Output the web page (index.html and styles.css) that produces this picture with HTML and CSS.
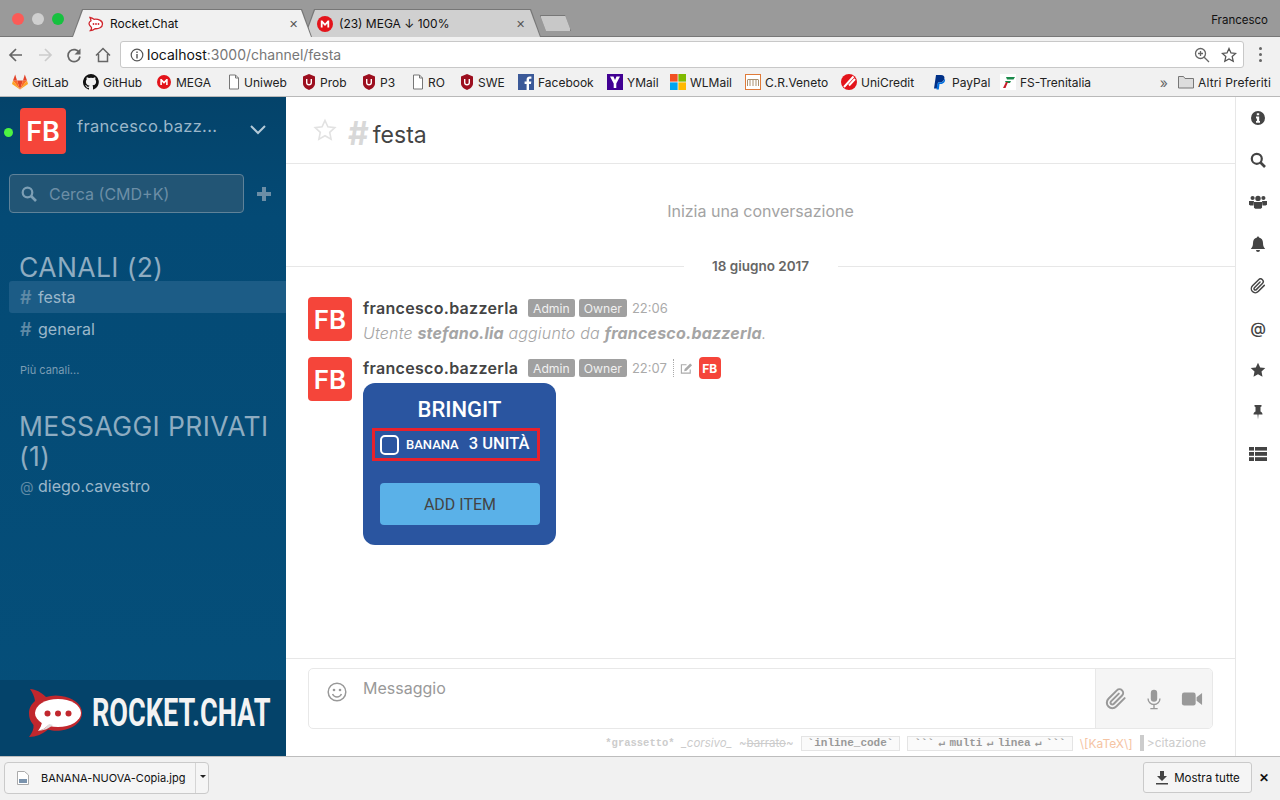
FILE: index.html
```html
<!DOCTYPE html>
<html lang="it">
<head>
  <meta charset="UTF-8">
  <title>Rocket.Chat</title>
  <link rel="stylesheet" href="styles.css">
</head>
<body>
<svg class="defs" width="0" height="0">
  <symbol id="clip" viewBox="0 0 24 24"><path fill="none" stroke="currentColor" stroke-width="2.2" stroke-linecap="round" d="M21.44 11.05l-9.19 9.19a6 6 0 0 1-8.49-8.49l9.19-9.19a4 4 0 0 1 5.66 5.66l-9.2 9.19a2 2 0 0 1-2.83-2.83l8.49-8.48"/></symbol>
  <symbol id="mega" viewBox="0 0 16 16"><circle cx="8" cy="8" r="8" fill="#e3141b"/><path fill="#fff" d="M3.8 11.5v-7h1.5L8 7.4l2.7-2.9h1.5v7h-1.8V7.6L8 10 5.6 7.6v3.9z"/></symbol>
  <symbol id="shield" viewBox="0 0 14 16"><path fill="#9c0f1f" d="M1 2.5 7 0l6 2.5v7C13 13 9.5 15 7 16c-2.500-1-6-3-6-6.500z"/><path fill="none" stroke="#fff" stroke-width="1.400" d="M4.700 5v3.500a2.300 2.300 0 0 0 4.600 0V5"/></symbol>
  <symbol id="page" viewBox="0 0 12 16"><path fill="#fff" stroke="#777" d="M1.500 1h6L10.500 4v11h-9z"/><path fill="none" stroke="#777" d="M7.500 1v3h3"/></symbol>
  <symbol id="rocket" viewBox="0 0 16 16"><path fill="#fff" stroke="#d0262d" stroke-width="1.300" d="M2 1.500c2 .3 3 1 4 1.800 4-.5 8.500 1 8.500 4.700 0 3.500-4 5-7.500 4.700-1.500 1.200-3 1.800-4.500 1.800 1-1 1.200-2 1-3C1.800 9.800 1 9 1 7.800c0-1.300.8-2.300 2-3C2.800 3.500 2.500 2.500 2 1.500z"/><circle cx="5.500" cy="8" r=".9" fill="#d0262d"/><circle cx="8" cy="8" r=".9" fill="#d0262d"/><circle cx="10.500" cy="8" r=".9" fill="#d0262d"/></symbol>
</svg>

<div class="page">
  <!-- browser -->
  <div class="tabstrip">
    <div class="lights"><i class="red"></i><i class="grey"></i><i class="green"></i></div>
    <div class="tab active"><div class="tab-in">
      <svg class="fav"><use href="#rocket"/></svg><span class="tab-title">Rocket.Chat</span><span class="tab-x">✕</span>
    </div></div>
    <div class="tab second"><div class="tab-in">
      <svg class="fav"><use href="#mega"/></svg><span class="tab-title">(23) MEGA ↓ 100%</span><span class="tab-x">✕</span>
    </div></div>
    <div class="tab newtab"><div class="tab-in"></div></div>
    <span class="profile">Francesco</span>
  </div>

  <div class="toolbar">
    <svg class="nav" viewBox="0 0 16 16"><path fill="none" stroke="#666" stroke-width="1.700" d="M14 8H2.500M8 2 2 8l6 6"/></svg>
    <svg class="nav" viewBox="0 0 16 16"><path fill="none" stroke="#ccc" stroke-width="1.700" d="M2 8h11.500M8 2l6 6-6 6"/></svg>
    <svg class="nav" viewBox="0 0 16 16"><path fill="none" stroke="#666" stroke-width="1.700" d="M13.500 6A6 6 0 1 0 14 9.500"/><path fill="#666" d="M14.500 1.500v6h-6z"/></svg>
    <svg class="nav" viewBox="0 0 16 16"><path fill="none" stroke="#666" stroke-width="1.500" d="M1 8.500 8 1.500l7 7M3.500 7v7.500h9V7"/></svg>
    <div class="address">
      <svg class="addr-i" viewBox="0 0 14 14"><circle cx="7" cy="7" r="5.800" fill="none" stroke="#555" stroke-width="1.200"/><path stroke="#555" stroke-width="1.400" d="M7 6v4.500M7 3.500v1.400"/></svg>
      <span class="url">localhost<span class="url-rest">:3000/channel/festa</span></span>
      <svg class="addr-r" viewBox="0 0 16 16"><circle cx="6.500" cy="6.500" r="5" fill="none" stroke="#666" stroke-width="1.300"/><path stroke="#666" stroke-width="1.300" d="M10.200 10.200 15 15M4 6.500h5M6.500 4v5"/></svg>
      <svg class="addr-r" viewBox="0 0 16 16"><path fill="none" stroke="#555" stroke-width="1.300" d="m8 1.500 2 4.400 4.700.5-3.500 3.200 1 4.700L8 12l-4.200 2.300 1-4.700L1.300 6.400 6 5.900z"/></svg>
    </div>
    <div class="dots"><i></i><i></i><i></i></div>
  </div>

  <div class="bookmarks">
    <span class="bm"><svg class="bi" viewBox="0 0 16 16"><path fill="#e24329" d="m8 15.500 3-9H5z"/><path fill="#fc6d26" d="M8 15.500 5 6.500H1zM8 15.500l3-9h4z"/><path fill="#fca326" d="M1 6.500 0 10l8 5.500zM15 6.500l1 3.500-8 5.500z"/><path fill="#e24329" d="M1 6.500h4L3.200.5zM15 6.500h-4L12.800.5z"/></svg>GitLab</span>
    <span class="bm"><svg class="bi" viewBox="0 0 16 16"><path fill="#111" d="M8 0a8 8 0 0 0-2.500 15.600c.4.100.5-.2.500-.4v-1.400c-2.200.5-2.700-1-2.700-1-.4-.9-.9-1.200-.9-1.200-.7-.5.100-.5.100-.5.800.1 1.200.8 1.200.8.700 1.200 1.900.9 2.300.7.100-.5.300-.9.500-1.100-1.800-.2-3.600-.9-3.600-4 0-.9.300-1.600.8-2.100-.1-.2-.4-1 .1-2.100 0 0 .7-.2 2.200.8a7.600 7.600 0 0 1 4 0c1.500-1 2.200-.8 2.200-.8.400 1.100.2 1.900.1 2.100.5.600.8 1.300.8 2.100 0 3.100-1.900 3.700-3.700 3.900.3.300.6.800.6 1.500v2.200c0 .2.100.5.600.4A8 8 0 0 0 8 0z"/></svg>GitHub</span>
    <span class="bm"><svg class="bi small"><use href="#mega"/></svg>MEGA</span>
    <span class="bm"><svg class="bi page-i"><use href="#page"/></svg>Uniweb</span>
    <span class="bm"><svg class="bi shield"><use href="#shield"/></svg>Prob</span>
    <span class="bm"><svg class="bi shield"><use href="#shield"/></svg>P3</span>
    <span class="bm"><svg class="bi page-i"><use href="#page"/></svg>RO</span>
    <span class="bm"><svg class="bi shield"><use href="#shield"/></svg>SWE</span>
    <span class="bm"><svg class="bi" viewBox="0 0 16 16"><rect width="16" height="16" fill="#3b5998"/><path fill="#fff" d="M11 16v-6h2l.3-2.500H11V6c0-.7.3-1.200 1.200-1.200h1.200V2.600C13.100 2.500 12.400 2.500 11.700 2.500 9.900 2.500 8.600 3.600 8.600 5.600v1.900h-2V10h2v6z"/></svg>Facebook</span>
    <span class="bm"><svg class="bi" viewBox="0 0 16 16"><rect width="16" height="16" fill="#410093"/><path fill="#fff" d="M3 2.500h3.500L8 6l1.500-3.500H13L9.300 9.500V14H6.700V9.500z"/></svg>YMail</span>
    <span class="bm"><svg class="bi" viewBox="0 0 16 16"><rect width="7.600" height="7.600" fill="#f25022"/><rect x="8.400" width="7.600" height="7.600" fill="#7fba00"/><rect y="8.400" width="7.600" height="7.600" fill="#00a4ef"/><rect x="8.400" y="8.400" width="7.600" height="7.600" fill="#ffb900"/></svg>WLMail</span>
    <span class="bm"><svg class="bi" viewBox="0 0 16 16"><rect x=".5" y=".5" width="15" height="15" fill="#fff" stroke="#e07b39"/><path fill="none" stroke="#a89070" d="M2.500 12V6M5 12V5M8 12V5M11 12V5M13.500 12V6M2.500 5.500h11"/></svg>C.R.Veneto</span>
    <span class="bm"><svg class="bi" viewBox="0 0 16 16"><circle cx="8" cy="8" r="8" fill="#e3141b"/><path stroke="#fff" stroke-width="2" d="M3 13 12.500 2.500M8 11.500 14 5"/></svg>UniCredit</span>
    <span class="bm"><svg class="bi" viewBox="0 0 16 16"><path fill="#003087" d="M4 1h5c2.500 0 3.800 1.300 3.400 3.500C12 7 10 8.500 7.500 8.500H6L5 14.500H2z"/><path fill="#0070e0" d="M13 5c.5 2.500-1.300 5-4.300 5H7.500L6.800 15.500H4.500L5 12l1-3.500h2c2.300 0 4-1.300 4.500-3.500z"/></svg>PayPal</span>
    <span class="bm"><svg class="bi" viewBox="0 0 16 16"><rect width="16" height="16" fill="#fff"/><path fill="#1a8a4a" d="M6 3h9l-1.500 2.500H7zM5 7h6l-1 2H6z"/><path fill="#c8202c" d="M3 14 6 8h2l-2.500 6z"/></svg>FS-Trenitalia</span>
    <span class="bm-more">»</span>
    <span class="bm bm-folder"><svg class="bi" viewBox="0 0 16 14"><path fill="#ddd" stroke="#777" d="M.5 13V1.500h5l1.500 2h8.500V13z"/></svg>Altri Preferiti</span>
  </div>

  <!-- app -->
  <div class="app">
    <aside class="sidebar">
      <div class="user">
        <i class="status"></i>
        <div class="avatar big">FB</div>
        <span class="username">francesco.bazz...</span>
        <svg class="chevron" viewBox="0 0 16 10"><path fill="none" stroke="#b4cad8" stroke-width="2" d="m1 1 7 7 7-7"/></svg>
      </div>
      <div class="search-row">
        <div class="search">
          <svg class="search-i" viewBox="0 0 16 16"><circle cx="6.500" cy="6.500" r="4.800" fill="none" stroke="#7d9fb5" stroke-width="2.200"/><path stroke="#7d9fb5" stroke-width="2.600" d="m10 10 5 5"/></svg>
          <span>Cerca (CMD+K)</span>
        </div>
        <span class="plus"></span>
      </div>
      <h3 class="side-title first">CANALI (2)</h3>
      <div class="room current"><b>#</b>festa</div>
      <div class="room"><b>#</b>general</div>
      <div class="more">Più canali...</div>
      <h3 class="side-title pvt">MESSAGGI PRIVATI (1)</h3>
      <div class="room dm"><b>@</b>diego.cavestro</div>
      <div class="side-logo">
        <svg class="logo-mark" viewBox="0 0 56 50">
          <path fill="#c1272d" d="M2 1c6 .5 11 3 16 8 5-1.500 10-2 15-1 12 1.500 21 8 21 17 0 10-10 16-21 17.500-5 .5-9 .2-13-1C15 46 8 49 1 49c3-4 5-8 4.500-12C2 33 1 29.500 1 25c0-5 2.500-9 6-12C6.500 8.500 4.500 4.500 2 1z"/>
          <ellipse cx="30" cy="25" rx="23" ry="14" fill="#fff"/>
          <path fill="#fff" d="M14 33c0 4-2 7-4 10 4-1 8-3 11-7z"/>
          <path fill="#ddd" d="M10 43c4-1 8-3 11-7l4 1c-4 3.500-9 5.500-15 6z"/>
          <circle cx="19.500" cy="25.500" r="3" fill="#c1272d"/><circle cx="30" cy="25.500" r="3" fill="#c1272d"/><circle cx="40.500" cy="25.500" r="3" fill="#c1272d"/>
        </svg>
        <span class="logo-box"><span class="logo-text">ROCKET.CHAT</span></span>
      </div>
    </aside>

    <main class="main">
      <header class="room-head">
        <svg class="room-star" viewBox="0 0 24 24"><path fill="none" stroke="#e2e2e2" stroke-width="1.600" d="m12 2.500 2.900 6.300 6.900.8-5.100 4.700 1.400 6.800-6.100-3.400-6.100 3.400 1.400-6.800-5.100-4.700 6.900-.8z"/></svg>
        <span class="room-hash">#</span>
        <span class="room-name">festa</span>
      </header>
      <div class="feed">
        <div class="start">Inizia una conversazione</div>
        <div class="date"><span>18 giugno 2017</span></div>
        <div class="msg">
          <div class="avatar">FB</div>
          <div class="msg-body">
            <div class="msg-head"><span class="author">francesco.bazzerla</span><span class="role">Admin</span><span class="role">Owner</span><span class="time">22:06</span></div>
            <div class="sys">Utente <b>stefano.lia</b> aggiunto da <b>francesco.bazzerla</b>.</div>
          </div>
        </div>
        <div class="msg">
          <div class="avatar">FB</div>
          <div class="msg-body">
            <div class="msg-head"><span class="author">francesco.bazzerla</span><span class="role">Admin</span><span class="role">Owner</span><span class="time">22:07</span>
              <span class="edited">
                <svg class="edit-i" viewBox="0 0 14 14"><path fill="none" stroke="#aaa" stroke-width="1.200" d="M11 8v4H1.500V3H7"/><path fill="#aaa" d="m5 7.500 6-6 2 2-6 6-2.500.5z"/></svg>
                <span class="avatar tiny">FB</span>
              </span>
            </div>
            <div class="card">
              <div class="card-title">BRINGIT</div>
              <div class="item"><i class="check"></i><span class="item-name">BANANA</span><span class="item-qty">3 UNITÀ</span></div>
              <div class="add">ADD ITEM</div>
            </div>
          </div>
        </div>
      </div>
      <footer class="composer">
        <div class="box">
          <svg class="emoji" viewBox="0 0 20 20"><circle cx="10" cy="10" r="8.800" fill="none" stroke="#999" stroke-width="1.500"/><circle cx="7" cy="8" r="1.300" fill="#999"/><circle cx="13" cy="8" r="1.300" fill="#999"/><path fill="none" stroke="#999" stroke-width="1.500" d="M5.500 12c1 2 2.500 3 4.500 3s3.500-1 4.500-3"/></svg>
          <span class="placeholder">Messaggio</span>
          <div class="box-tools">
            <svg class="tool"><use href="#clip"/></svg>
            <svg class="tool" viewBox="0 0 24 24"><rect x="8.500" y="2" width="7" height="13" rx="3.500" fill="#999"/><path fill="none" stroke="#999" stroke-width="1.500" d="M5.500 11.500a6.500 6.500 0 0 0 13 0M12 18v4M8 22.500h8"/></svg>
            <svg class="tool" viewBox="0 0 24 24"><rect x="1" y="5" width="15" height="14" rx="2.500" fill="#999"/><path fill="#999" d="m17 10 6-4.500v13L17 14z"/></svg>
          </div>
        </div>
        <div class="hints">
          <b>*grassetto*</b>
          <i>_corsivo_</i>
          <span>~<s>barrato</s>~</span>
          <code>`inline_code`</code>
          <code class="multi">``` ↵ multi ↵ linea ↵ ```</code>
          <span class="katex">\[KaTeX\]</span>
          <span class="quote">&gt;citazione</span>
        </div>
      </footer>
    </main>

    <nav class="rail">
      <svg class="rail-i" viewBox="0 0 16 16"><path fill-rule="evenodd" fill="#444" d="M8 1a7 7 0 1 0 0 14A7 7 0 0 0 8 1zM6.800 3.200h2.400v2.100H6.800zM6 6.500h3.200v4.400H10V12.800H6v-1.900h.9V8.400H6z"/></svg>
      <svg class="rail-i" viewBox="0 0 16 16"><circle cx="6.800" cy="6.800" r="5" fill="none" stroke="#444" stroke-width="2.200"/><path stroke="#444" stroke-width="2.600" d="m10.500 10.500 4.500 4.500"/></svg>
      <svg class="rail-i wide" viewBox="0 0 20 16"><g fill="#444"><circle cx="4" cy="3.500" r="2.300"/><circle cx="16" cy="3.500" r="2.300"/><circle cx="10" cy="4" r="3"/><path d="M0 7h5.500l-.5 5H1.500L0 11zM14.500 7H20v4l-1.500 1H15zM5.500 8h9v6.500l-1.500 1H7l-1.500-1z"/></g></svg>
      <svg class="rail-i" viewBox="0 0 16 16"><path fill="#444" d="M8 0.500c.7 0 1 .5 1 1C11.500 2 13 4 13 7c0 3 .8 4.500 2.200 6H.8C2.200 11.500 3 10 3 7c0-3 1.500-5 4-5.500 0-.5.300-1 1-1zM6 14h4a2 2 0 0 1-4 0z"/></svg>
      <svg class="rail-i dark"><use href="#clip"/></svg>
      <span class="rail-at">@</span>
      <svg class="rail-i" viewBox="0 0 16 16"><path fill="#444" d="m8 .8 2.200 4.700 5.100.6-3.800 3.500 1 5.100L8 12.200l-4.500 2.500 1-5.100L.7 6.100l5.100-.6z"/></svg>
      <svg class="rail-i" viewBox="0 0 16 16"><path fill="#444" d="M4.500 1h7v1.500L10.500 3v4.500c1.300.6 2 1.700 2 3H8.500L8 15.500l-.5-5h-4c0-1.300.7-2.400 2-3V3l-1-.5z"/></svg>
      <svg class="rail-i wide" viewBox="0 0 18 14"><g fill="#444"><rect width="5" height="3.600"/><rect x="6" width="12" height="3.600"/><rect y="5" width="5" height="3.800"/><rect x="6" y="5" width="12" height="3.800"/><rect y="10.200" width="5" height="3.800"/><rect x="6" y="10.200" width="12" height="3.800"/></g></svg>
    </nav>
  </div>

  <!-- download bar -->
  <div class="downloads">
    <div class="file">
      <svg class="file-i" viewBox="0 0 12 14"><path fill="#fff" stroke="#aaa" d="M.5.500h7l4 3.500v9.500H.5z"/><rect x="2" y="8" width="8" height="4" fill="#7a93ad"/></svg>
      <span class="file-name">BANANA-NUOVA-Copia.jpg</span>
      <span class="file-caret"></span>
    </div>
    <div class="show-all">
      <svg class="dl-i" viewBox="0 0 14 14"><path fill="#444" d="M5 0h4v5h3L7 10 2 5h3zM1 12h12v1.500H1z"/></svg>
      Mostra tutte
    </div>
    <span class="dl-x">✕</span>
  </div>
</div>
</body>
</html>
```

FILE: styles.css
```css
* {
  box-sizing: border-box;
}

html, body {
  margin: 0;
  height: 100%;
  overflow: hidden;
}

body {
  font-family: Inter, "Liberation Sans", sans-serif;
  color: #444;
}

.defs {
  display: block;
  height: 0;
}

.page {
  width: 1280px;
  height: 800px;
  display: flex;
  flex-direction: column;
  overflow: hidden;
}

/* browser tabs */
.tabstrip {
  height: 37px;
  flex: none;
  background: #9a9a9a;
  border-bottom: 1px solid #777;
  display: flex;
  align-items: flex-end;
  font-size: 12px;
  color: #111;
}

.lights {
  display: flex;
  gap: 8px;
  width: 72px;
  padding: 0 0 11px 12px;
  align-self: flex-end;
}

.lights i {
  width: 12px;
  height: 12px;
  border-radius: 50%;
}

.red { background: #fb5b57; }
.grey { background: #cfcfcf; }
.green { background: #16c13f; }

.tab {
  height: 28px;
  margin-bottom: -1px;
  padding: 1px 1px 0;
  background: #777;
  clip-path: polygon(10px 0, calc(100% - 10px) 0, 100% 100%, 0 100%);
}

.tab-in {
  height: 100%;
  display: flex;
  align-items: center;
  padding: 0 15px 0 12px;
  clip-path: polygon(10px 0, calc(100% - 10px) 0, 100% 100%, 0 100%);
  background: #d0d0d0;
}

.tab.active {
  width: 240px;
  position: relative;
  z-index: 1;
}

.tab.active .tab-in {
  background: #f1f1f1;
  padding: 0 13px 0 15px;
}

.tab.second {
  width: 237px;
  margin-left: -8px;
}

.tab.newtab {
  width: 31px;
  height: 16px;
  margin: 0 0 5px -1px;
  clip-path: polygon(0 0, calc(100% - 6px) 0, 100% 100%, 6px 100%);
}

.tab.newtab .tab-in {
  background: #c8c8c8;
  clip-path: none;
}

.tab-in .fav {
  width: 16px;
  height: 16px;
  flex: none;
  margin-right: 6px;
}

.tab-title {
  flex: 1;
  white-space: nowrap;
}

.tab-x {
  font-size: 11px;
  color: #555;
}

.profile {
  margin-left: auto;
  padding: 0 12px 9px 0;
  font-size: 11.500px;
}

/* toolbar */
.toolbar {
  height: 31px;
  flex: none;
  background: #f1f1f1;
  display: flex;
  align-items: center;
  padding: 4px 0 0 8px;
}

.nav {
  width: 16px;
  height: 16px;
  margin-right: 13px;
}

.address {
  width: 1124px;
  height: 27px;
  margin-left: -4px;
  background: #fff;
  border: 1px solid #c8c8c8;
  border-radius: 3px;
  display: flex;
  align-items: center;
  padding: 0 6px 0 10px;
}

.addr-i {
  width: 14px;
  height: 14px;
  margin-right: 3px;
  margin-left: -1px;
}

.url {
  flex: 1;
  font-size: 14px;
  color: #111;
}

.url-rest {
  color: #777;
}

.addr-r {
  width: 16px;
  height: 16px;
  margin-left: 11px;
}

.dots {
  display: flex;
  flex-direction: column;
  gap: 3px;
  margin-left: 15px;
}

.dots i {
  width: 3px;
  height: 3px;
  border-radius: 50%;
  background: #666;
}

/* bookmarks */
.bookmarks {
  height: 29px;
  flex: none;
  background: #f1f1f1;
  border-bottom: 1px solid #b9b9b9;
  display: flex;
  align-items: center;
  padding: 0 0 0 12px;
  font-size: 12px;
  color: #222;
  white-space: nowrap;
}

.bm {
  display: flex;
  align-items: center;
  gap: 4px;
  flex: none;
}

.bm:nth-child(1) { width: 71px; }
.bm:nth-child(2) { width: 74px; }
.bm:nth-child(3) { width: 71px; }
.bm:nth-child(4) { width: 74px; }
.bm:nth-child(5) { width: 60px; }
.bm:nth-child(6) { width: 50px; }
.bm:nth-child(7) { width: 48px; }
.bm:nth-child(8) { width: 58px; }
.bm:nth-child(9) { width: 89px; }
.bm:nth-child(10) { width: 63px; }
.bm:nth-child(11) { width: 75px; }
.bm:nth-child(12) { width: 96px; }
.bm:nth-child(13) { width: 91px; }
.bm:nth-child(14) { width: 68px; }

.bi {
  width: 16px;
  height: 16px;
  flex: none;
}

.bi.small {
  width: 14px;
  height: 14px;
  margin-right: 1px;
}

.bi.shield {
  width: 14px;
}

.bi.page-i {
  width: 12px;
}

.bm-more {
  margin-left: auto;
  margin-right: 10px;
  color: #666;
  font-size: 14px;
}

.bm-folder {
  margin-right: 9px;
  letter-spacing: 0.15px;
}

/* app */
.app {
  flex: 1;
  min-height: 0;
  display: flex;
}

.sidebar {
  width: 286px;
  flex: none;
  display: flex;
  flex-direction: column;
  background: linear-gradient(#04436a 0, #044a75 120px, #054f7a 100%);
  color: #9bb7ca;
}

.user {
  display: flex;
  align-items: flex-start;
  padding-top: 11px;
  height: 57px;
}

.status {
  width: 9px;
  height: 9px;
  margin: 20px 7px 0 4px;
  border-radius: 50%;
  background: #4df442;
}

.avatar {
  width: 44px;
  height: 44px;
  flex: none;
  border-radius: 4px;
  background: #f5453a;
  color: #fff;
  font-size: 26px;
  font-weight: 600;
  display: flex;
  align-items: center;
  justify-content: center;
}

.avatar.big {
  width: 46px;
  height: 46px;
  font-size: 27px;
}

.avatar.tiny {
  width: 22px;
  height: 22px;
  font-size: 12px;
  font-weight: 700;
  border-radius: 4px;
}

.username {
  width: 162px;
  margin: 8px 0 0 11px;
  font-size: 16.500px;
  letter-spacing: 0.3px;
  white-space: nowrap;
}

.chevron {
  width: 16px;
  height: 10px;
  margin: 17px 0 0 11px;
}

.search-row {
  display: flex;
  align-items: center;
  margin-top: 20px;
  padding-left: 9px;
}

.search {
  width: 235px;
  height: 39px;
  background: #225575;
  border: 1px solid #5f8299;
  border-radius: 4px;
  display: flex;
  align-items: center;
  padding-left: 11px;
  font-size: 16px;
  color: #6c8ea6;
}

.search-i {
  width: 16px;
  height: 16px;
  margin-right: 12px;
}

.plus {
  width: 14px;
  height: 14px;
  margin-left: 13px;
  background:
    linear-gradient(#6c8ea6, #6c8ea6) center / 14px 4px no-repeat,
    linear-gradient(#6c8ea6, #6c8ea6) center / 4px 14px no-repeat;
}

.side-title {
  margin: 0;
  padding-left: 19px;
  font-size: 26.500px;
  font-weight: 400;
  letter-spacing: 0.4px;
  line-height: 30px;
  color: #8eacc1;
}

.side-title.first {
  margin-top: 39px;
  margin-bottom: -1px;
}

.side-title.pvt {
  margin-top: 34px;
}

.room {
  height: 32px;
  margin-left: 9px;
  padding-left: 11px;
  display: flex;
  align-items: center;
  font-size: 16px;
  color: #9bb7ca;
}

.room b {
  width: 18px;
  font-size: 18px;
  font-weight: 600;
  color: #5f8aa6;
}

.room.current {
  background: #1c5c86;
  border-radius: 3px 0 0 3px;
}

.room.dm b {
  font-size: 14px;
  font-weight: 400;
}

.room.dm {
  margin-top: -1px;
}

.more {
  margin-top: 18px;
  padding-left: 20px;
  font-size: 11px;
  line-height: 14px;
  color: #7b9db4;
}

.side-logo {
  margin-top: auto;
  height: 76px;
  flex: none;
  background: #04436a;
  display: flex;
  align-items: center;
  padding: 0 0 10px 28px;
}

.logo-mark {
  width: 56px;
  height: 50px;
  flex: none;
}

.logo-box {
  width: 178px;
  margin-left: 8px;
  overflow: visible;
  white-space: nowrap;
}

.logo-text {
  display: inline-block;
  font-family: Roboto, sans-serif;
  font-size: 39px;
  font-weight: 700;
  color: #f3f3f3;
  transform: scaleX(0.695);
  transform-origin: left center;
}

/* main column */
.main {
  flex: 1;
  min-width: 0;
  display: flex;
  flex-direction: column;
  background: #fff;
}

.room-head {
  height: 67px;
  flex: none;
  border-bottom: 1px solid #e7e7e7;
  display: flex;
  align-items: center;
  padding-left: 27px;
}

.room-star {
  width: 24px;
  height: 24px;
}

.room-hash {
  margin: 6px 0 0 11px;
  font-size: 32px;
  font-weight: 700;
  color: #d8d8d8;
}

.room-name {
  margin: 10px 0 0 4px;
  font-size: 23px;
  color: #444;
}

.feed {
  flex: 1;
  min-height: 0;
}

.start {
  margin-top: 37px;
  text-align: center;
  font-size: 16px;
  line-height: 20px;
  color: #a3a3a3;
}

.date {
  margin-top: 37px;
  height: 16px;
  display: flex;
  align-items: center;
  font-size: 13.500px;
  font-weight: 600;
  color: #666;
}

.date::before,
.date::after {
  content: "";
  flex: 1;
  border-top: 1px solid #e7e7e7;
}

.date span {
  width: 154px;
  text-align: center;
}

.msg {
  display: flex;
  gap: 11px;
  margin-top: 16px;
  padding-left: 22px;
}

.date + .msg {
  margin-top: 23px;
}

.msg-head {
  height: 22px;
  display: flex;
  align-items: center;
}

.author {
  width: 165px;
  font-size: 16px;
  font-weight: 600;
  letter-spacing: 0.3px;
  color: #444;
  white-space: nowrap;
}

.role {
  height: 18px;
  margin-right: 4px;
  padding: 0 5px;
  border-radius: 2px;
  background: #a0a0a0;
  color: #f0f0f0;
  font-size: 12.200px;
  line-height: 19px;
}

.time {
  margin-left: 1px;
  font-size: 13px;
  color: #aaa;
}

.sys {
  height: 22px;
  font-size: 16px;
  font-weight: 300;
  letter-spacing: 0.18px;
  line-height: 29px;
  font-style: italic;
  color: #a5a5a5;
}

.sys b {
  font-weight: 700;
}

.edited {
  display: flex;
  align-items: center;
  margin-left: 6px;
  padding-left: 6px;
  border-left: 1px dotted #aaa;
  height: 18px;
}

.edit-i {
  width: 13px;
  height: 13px;
  margin-right: 6px;
}

.card {
  width: 193px;
  height: 162px;
  margin-top: 4px;
  padding: 9px 9px 0;
  background: #2a55a0;
  border-radius: 12px;
  color: #fff;
  font-family: Roboto, sans-serif;
  display: flex;
  flex-direction: column;
}

.card-title {
  text-align: center;
  font-size: 22px;
  font-weight: 500;
  line-height: 36px;
}

.item {
  width: 168px;
  height: 33px;
  border: 3px solid #e8212c;
  display: flex;
  align-items: center;
  padding-left: 5px;
}

.check {
  width: 19px;
  height: 20px;
  border: 2px solid #fff;
  border-radius: 5px;
}

.item-name {
  margin-left: 7px;
  font-size: 13px;
  font-weight: 500;
}

.item-qty {
  margin: -2px 0 0 10px;
  font-size: 16.500px;
  font-weight: 500;
}

.add {
  width: 160px;
  height: 42px;
  margin: 22px 0 0 8px;
  background: #5ab1e8;
  border-radius: 4px;
  color: #444;
  font-size: 16px;
  line-height: 44px;
  text-align: center;
}

/* composer */
.composer {
  height: 98px;
  flex: none;
  border-top: 1px solid #e7e7e7;
  padding: 9px 22px 0;
}

.box {
  height: 61px;
  border: 1px solid #e8e8e8;
  border-radius: 5px;
  display: flex;
  align-items: flex-start;
  overflow: hidden;
}

.emoji {
  width: 20px;
  height: 20px;
  margin: 13px 0 0 18px;
}

.placeholder {
  flex: 1;
  margin: 9px 0 0 16px;
  font-size: 16px;
  color: #999;
}

.box-tools {
  width: 117px;
  height: 100%;
  background: #f5f5f5;
  border-left: 1px solid #e8e8e8;
  display: flex;
  align-items: center;
  gap: 16px;
  padding-left: 9px;
}

.tool {
  width: 22px;
  height: 22px;
  color: #999;
}

.hints {
  margin-top: 5px;
  height: 18px;
  display: flex;
  align-items: center;
  justify-content: flex-end;
  gap: 7px;
  padding-right: 7px;
  font-size: 11.500px;
  color: #ccc;
  white-space: nowrap;
}

.hints b {
  font-family: "Liberation Mono", monospace;
  font-size: 10.500px;
}

.hints code {
  height: 15px;
  padding: 0 6px;
  border: 1px solid #e4e4e4;
  background: #fafafa;
  font-family: "Liberation Mono", monospace;
  font-size: 11px;
  font-weight: 700;
  line-height: 12px;
  color: #999;
}

.hints .multi {
  word-spacing: -2.300px;
}

.katex {
  font-size: 12px;
  color: #f5c4a3;
}

.quote {
  font-size: 12px;
  border-left: 4px solid #ccc;
  padding-left: 3px;
  line-height: 16px;
}

/* right rail */
.rail {
  width: 45px;
  flex: none;
  background: #fff;
  border-left: 1px solid #e7e7e7;
  display: flex;
  flex-direction: column;
  align-items: center;
  padding-top: 13px;
  gap: 26px;
}

.rail-i {
  width: 16px;
  height: 16px;
  flex: none;
}

.rail-i.wide {
  width: 18px;
}

.rail-i.dark {
  color: #444;
}

.rail-at {
  height: 16px;
  font-size: 16px;
  font-weight: 500;
  line-height: 16px;
  color: #444;
}

/* download bar */
.downloads {
  height: 44px;
  flex: none;
  background: #f1f1f1;
  border-top: 1px solid #bdbdbd;
  display: flex;
  align-items: center;
  padding: 0 10px 2px 4px;
  font-size: 12px;
  color: #111;
}

.file {
  width: 205px;
  height: 32px;
  border: 1px solid #cacaca;
  border-radius: 4px;
  background: #f5f5f5;
  display: flex;
  align-items: center;
  padding-left: 12px;
  font-size: 11px;
}

.file-i {
  width: 12px;
  height: 14px;
  margin-right: 12px;
}

.file-name {
  width: 154px;
  white-space: nowrap;
}

.file-caret {
  height: 100%;
  flex: 1;
  border-left: 1px solid #d5d5d5;
  position: relative;
}

.file-caret::after {
  content: "";
  position: absolute;
  left: 4px;
  top: 12px;
  border: 3px solid transparent;
  border-top: 3px solid #222;
}

.show-all {
  margin-left: auto;
  width: 109px;
  height: 31px;
  border: 1px solid #cacaca;
  border-radius: 3px;
  display: flex;
  align-items: center;
  justify-content: center;
  gap: 5px;
  background: #f5f5f5;
  font-size: 11.500px;
}

.dl-i {
  width: 14px;
  height: 14px;
}

.dl-x {
  margin-left: 6px;
  width: 12px;
  text-align: center;
  font-size: 12px;
  font-weight: 700;
}
```
